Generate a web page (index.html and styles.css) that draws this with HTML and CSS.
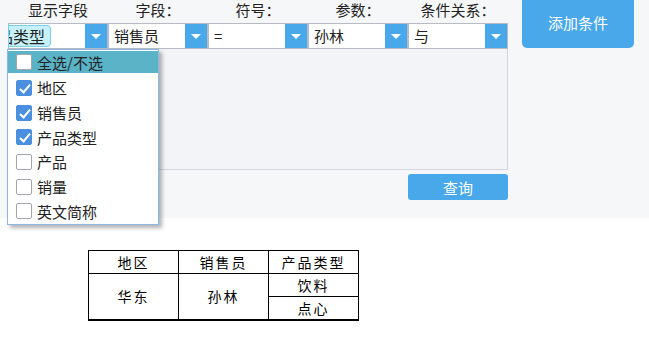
FILE: index.html
```html
<!DOCTYPE html>
<html lang="zh">
<head>
<meta charset="utf-8">
<link rel="stylesheet" href="styles.css">
</head>
<body>
<div class="top">
  <div class="form">
    <div class="labels">
      <div class="lbl">显示字段</div>
      <div class="lbl">字段：</div>
      <div class="lbl">符号：</div>
      <div class="lbl">参数：</div>
      <div class="lbl">条件关系：</div>
    </div>
    <div class="selects">
      <div class="sel first"><div class="val"><span class="chip">产品类型</span></div><div class="arr"></div></div>
      <div class="sel"><div class="val">销售员</div><div class="arr"></div></div>
      <div class="sel"><div class="val">=</div><div class="arr"></div></div>
      <div class="sel"><div class="val">孙林</div><div class="arr"></div></div>
      <div class="sel"><div class="val">与</div><div class="arr"></div></div>
    </div>
    <div class="area"></div>
    <div class="actions"><button class="btn query">查询</button></div>
  </div>
  <button class="btn add">添加条件</button>
  <ul class="drop">
    <li class="item hl"><span class="cb"></span>全选/不选</li>
    <li class="item"><span class="cb on"></span>地区</li>
    <li class="item"><span class="cb on"></span>销售员</li>
    <li class="item"><span class="cb on"></span>产品类型</li>
    <li class="item"><span class="cb"></span>产品</li>
    <li class="item"><span class="cb"></span>销量</li>
    <li class="item"><span class="cb"></span>英文简称</li>
  </ul>
</div>
<div class="result">
  <table class="tbl">
    <tr><th>地区</th><th>销售员</th><th>产品类型</th></tr>
    <tr><td rowspan="2">华东</td><td rowspan="2">孙林</td><td>饮料</td></tr>
    <tr><td>点心</td></tr>
  </table>
</div>
</body>
</html>
```

FILE: styles.css
```css
* { box-sizing: border-box; }
html, body { margin: 0; padding: 0; background: #fff; }
body { font-family: "Noto Sans CJK SC", "Noto Sans", sans-serif; font-size: 15px; color: #222; }

.top {
  position: relative;
  background: #f6f7f9;
  height: 218px;
  display: flex;
  padding-left: 8px;
}
.form { width: 500px; display: flex; flex-direction: column; }
.labels { display: flex; height: 23px; }
.lbl { width: 100px; text-align: center; line-height: 19px; color: #222; }
.selects { display: flex; height: 26px; }
.sel {
  width: 100px; display: flex; background: #fff;
  border: 1px solid #b7bbc6;
}
.val { flex: 1; padding-left: 5px; line-height: 24px; overflow: hidden; white-space: nowrap; }
.first { border-left-color: #79cfe6; }
.first .val { padding-left: 0; display: flex; align-items: center; }
.chip {
  display: inline-block; flex: none; margin-left: -36px; padding: 0 5px 0 7px;
  background: #c6f1fb; border: 1px solid #79cfe6; border-radius: 4px;
  line-height: 20px; height: 22px; font-size: 16px;
}
.arr { width: 22px; background: #48a8e9; position: relative; }
.arr::after {
  content: ""; position: absolute; left: 6px; top: 10px;
  border-left: 5px solid transparent; border-right: 5px solid transparent;
  border-top: 5px solid #fff;
}
.area {
  height: 121px; background: #f3f4f7;
  border: 1px solid #d3d6dd; border-top: none;
}
.actions { display: flex; justify-content: flex-end; padding-top: 4px; }
.btn {
  border: none; color: #fff; background: #48a8e9; font-family: inherit; font-size: 15px;
  border-radius: 3px; padding: 0;
}
.query { width: 100px; height: 26px; }
.add {
  width: 112px; height: 52px; margin-top: -4px; margin-left: 14px;
  border-radius: 5px; font-size: 15px;
}

.drop {
  position: absolute; left: 7px; top: 49px; width: 152px; height: 176px;
  margin: 0; padding: 1px 0 0; list-style: none; background: #fff;
  border: 1px solid #8fb6e6;
  box-shadow: 3px 3px 4px rgba(0,0,0,0.3);
}
.item { height: 24.67px; display: flex; align-items: center; padding-left: 8px; gap: 5px; }
.item.hl { background: #5ab3c7; height: 22px; margin-bottom: 2.6px; }
.cb {
  width: 16px; height: 16px; border: 1px solid #a4a7ac; border-radius: 2px; background: #fff;
  position: relative; flex: none;
}
.cb.on { background: #4a8fe0; border-color: #4a8fe0; }
.cb.on::after {
  content: ""; position: absolute; left: 4.5px; top: 1px; width: 4px; height: 9px;
  border: solid #fff; border-width: 0 2px 2px 0; transform: rotate(40deg);
}

.result { padding: 32px 0 0 88px; }
.tbl { border-collapse: collapse; font-size: 14px; color: #000; }
.tbl th, .tbl td {
  border: 1px solid #000; text-align: center; font-weight: normal;
  letter-spacing: 2px; padding: 0; height: 23px; width: 90px;
}
.tbl tr:last-child td { border-bottom-width: 2px; }
.tbl tr:nth-child(2) td[rowspan] { border-bottom-width: 2px; }
```
